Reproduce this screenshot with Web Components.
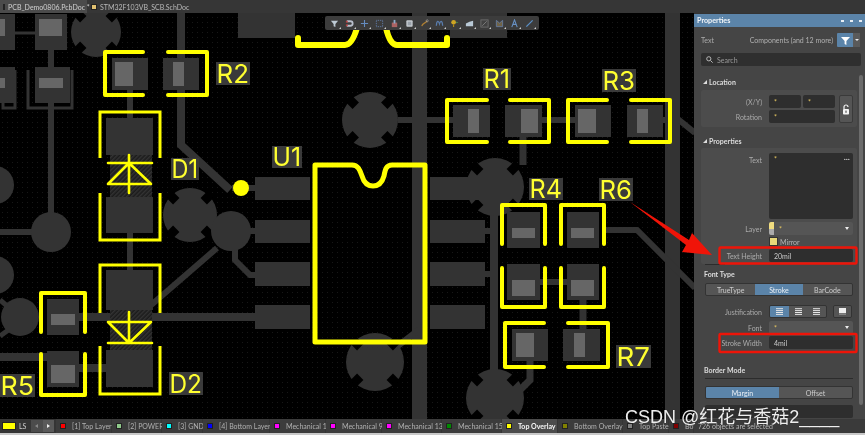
<!DOCTYPE html>
<html>
<head>
<meta charset="utf-8">
<title>PCB editor</title>
<style>
  html, body { margin: 0; background: #000; overflow: hidden; }
</style>
</head>
<body>
<ad-app>
  <doc-tabs slot="tabs">
    <doc-tab active color="#2f9c7c">PCB_Demo0806.PcbDoc *</doc-tab>
    <doc-tab color="#e0c070">STM32F103VB_SCB.SchDoc</doc-tab>
  </doc-tabs>

  <pcb-canvas slot="canvas"><pcb-toolbar></pcb-toolbar></pcb-canvas>

  <props-panel slot="panel">
    <prop-heading style="margin-top:9px">Location</prop-heading>
    <prop-box style="height:37px;margin-top:1px">
      <prop-row label="(X/Y)" style="margin-top:5px">
        <prop-field w="32">*</prop-field><prop-field w="32" style="margin-left:2px">*</prop-field>
      </prop-row>
      <prop-row label="Rotation" style="margin-top:2px">
        <prop-field w="66">*</prop-field>
      </prop-row>
      <lock-button></lock-button>
    </prop-box>
    <prop-heading style="margin-top:7px">Properties</prop-heading>
    <prop-box style="height:116px;margin-top:0">
      <prop-row top label="Text" style="margin-top:5px;height:66px;align-items:start">
        <prop-field w="84" tall more>*</prop-field>
      </prop-row>
      <prop-row label="Layer" style="margin-top:3px">
        <prop-field w="84" swatch select>*</prop-field>
      </prop-row>
      <prop-row style="margin-top:2px;height:9px">
        <prop-check>Mirror</prop-check>
      </prop-row>
      <prop-row label="Text Height" style="margin-top:3px">
        <prop-field w="84" plain>20mil</prop-field>
      </prop-row>
    </prop-box>
    <prop-rule style="width:20px;margin-left:11px"></prop-rule>
    <prop-title style="margin-top:4px">Font Type</prop-title>
    <seg-group style="margin:3px 0 0 11px;width:148px">
      <seg-button style="flex:50">TrueType</seg-button>
      <seg-button style="flex:48" active>Stroke</seg-button>
      <seg-button style="flex:50">BarCode</seg-button>
    </seg-group>
    <prop-row label="Justification" style="margin-top:9px;margin-left:7px">
      <seg-group style="width:58px">
        <seg-button active><align-icon></align-icon></seg-button>
        <seg-button><align-icon></align-icon></seg-button>
        <seg-button><align-icon></align-icon></seg-button>
      </seg-group>
      <seg-group style="width:19px;margin-left:6px"><seg-button><align-icon box></align-icon></seg-button></seg-group>
    </prop-row>
    <prop-row label="Font" style="margin-top:3px;margin-left:7px">
      <prop-field w="84" select>*</prop-field>
    </prop-row>
    <prop-row label="Stroke Width" style="margin-top:2px;margin-left:7px">
      <prop-field w="84" plain>4mil</prop-field>
    </prop-row>
    <prop-title style="margin-top:16px">Border Mode</prop-title>
    <prop-rule style="width:148px;margin:2px 0 0 11px"></prop-rule>
    <seg-group style="margin:7px 0 0 11px;width:148px">
      <seg-button active>Margin</seg-button>
      <seg-button>Offset</seg-button>
    </seg-group>
    <prop-row style="margin-top:5px;margin-left:7px;height:14px">
      <prop-field w="84" style="margin-left:-64px;width:148px"></prop-field>
    </prop-row>
  </props-panel>

  <layer-bar slot="layers">
    <layer-tab color="#ff0000">[1] Top Layer</layer-tab>
    <layer-tab color="#8fc98a">[2] POWER</layer-tab>
    <layer-tab color="#00ffff">[3] GND</layer-tab>
    <layer-tab color="#0000ff">[4] Bottom Layer</layer-tab>
    <layer-tab color="#ff00ff">Mechanical 1</layer-tab>
    <layer-tab color="#ff00ff">Mechanical 9</layer-tab>
    <layer-tab color="#ff00ff">Mechanical 13</layer-tab>
    <layer-tab color="#008a00">Mechanical 15</layer-tab>
    <layer-tab color="#ffff00" active>Top Overlay</layer-tab>
    <layer-tab color="#808000">Bottom Overlay</layer-tab>
    <layer-tab color="#808080">Top Paste</layer-tab>
    <layer-tab color="#800000">Bot</layer-tab>
  </layer-bar>

  <red-notes slot="notes"></red-notes>
</ad-app>

<script>
// main frame: tab strip, canvas + panel, layer strip
class AdApp extends HTMLElement {
  connectedCallback() {
    this.attachShadow({ mode: 'open' });
    this.shadowRoot.innerHTML = `
      <style>
        :host {
          display: grid;
          grid-template-columns: 694px 171px;
          grid-template-rows: 13px 406px 14px 2px;
          width: 865px;
          height: 435px;
          position: relative;
          overflow: hidden;
          font: 7px Lato, "Open Sans", sans-serif;
          color: #c4c4c4;
          filter: blur(0.35px);
        }
        .tabs { grid-column: 1 / 3; display: grid; }
        .layers { grid-column: 1 / 3; display: grid; }
        .strip { grid-column: 1 / 3; background: #c9c9c9; }
      </style>
      <div class="tabs"><slot name="tabs"></slot></div>
      <slot name="canvas"></slot>
      <slot name="panel"></slot>
      <div class="layers"><slot name="layers"></slot></div>
      <div class="strip"></div>
      <slot name="notes"></slot>
    `;
  }
}

class DocTabs extends HTMLElement {
  connectedCallback() {
    this.attachShadow({ mode: 'open' });
    this.shadowRoot.innerHTML = `
      <style>:host { display: flex; background: #363636; }</style>
      <slot></slot>
    `;
  }
}

class DocTab extends HTMLElement {
  connectedCallback() {
    const c = this.getAttribute('color');
    this.attachShadow({ mode: 'open' });
    this.shadowRoot.innerHTML = `
      <style>
        :host { display: flex; align-items: center; gap: 3px; padding: 0 0 0 3px; width: 87px; box-sizing: border-box; white-space: nowrap; color: #b8b8b8; }
        :host([active]) { background: #4b4b4b; color: #d0d0d0; }
        :host(:not([active])) { width: auto; padding-left: 4px; }
        i { width: 6px; height: 6px; background: ${c}; border: 1px solid #222; box-sizing: border-box; }
      </style>
      <i></i><slot></slot>
    `;
  }
}

// the board itself, drawn in page coordinates
const CU = '#333333';
const pad = (x1, y1, x2, y2) => `<rect x="${x1}" y="${y1}" width="${x2 - x1}" height="${y2 - y1}" fill="${CU}"/>`;
const paste = (x1, y1, x2, y2) => `<rect x="${x1}" y="${y1}" width="${x2 - x1}" height="${y2 - y1}" fill="#666"/>`;
const track = (d, w = 6) => `<path d="${d}" fill="none" stroke="${CU}" stroke-width="${w}"/>`;
const via = (x, y, r = 20) => `<circle cx="${x}" cy="${y}" r="${r}" fill="${CU}"/>`;
const thermal = (x, y, r = 28) => {
  const a = r * 0.72 * Math.SQRT1_2, b = (r + 2) * Math.SQRT1_2;
  const cut = [[1, 1], [1, -1], [-1, 1], [-1, -1]].map(([i, j]) =>
    `<path d="M${x + i * a} ${y + j * a}L${x + i * b} ${y + j * b}" stroke="#000" stroke-width="9"/>`).join('');
  return via(x, y, r) + cut;
};
const silk = (d, w = 4) => `<path d="${d}" fill="none" stroke="#ffff00" stroke-width="${w}" stroke-linecap="round" stroke-linejoin="round"/>`;
const label = (t, x1, y1, x2, y2) => `<rect x="${x1}" y="${y1}" width="${x2 - x1}" height="${y2 - y1}" fill="#3a3a3a"/>
  <text x="${x1 + 0.5}" y="${y2 - 2.5}" textLength="${x2 - x1 - 1.5}" lengthAdjust="spacingAndGlyphs">${t}</text>`;

class PcbCanvas extends HTMLElement {
  connectedCallback() {
    this.attachShadow({ mode: 'open' });
    this.shadowRoot.innerHTML = `
      <style>
        :host { display: block; position: relative; background: #000; overflow: hidden; }
        svg { display: block; }
        text { font: 400 26px Inter, "Open Sans", sans-serif; fill: #ffff30; }
      </style>
      <svg width="694" height="406" viewBox="0 13 694 406">
        <defs>
          <pattern id="grid" width="5" height="5" patternUnits="userSpaceOnUse"><rect x="2" y="2" width="1" height="1" fill="#171717"/></pattern>
          <pattern id="hatch" width="3" height="3" patternUnits="userSpaceOnUse" patternTransform="rotate(45)"><rect width="3" height="3" fill="#1c1c1c"/><rect width="1.4" height="3" fill="#333"/></pattern>
        </defs>
        <rect x="0" y="13" width="694" height="406" fill="url(#grid)"/>

        <rect x="412" y="13" width="15" height="406" fill="${CU}"/>
        <rect x="665" y="13" width="15" height="406" fill="${CU}"/>
        ${track('M181 13V145L230 190', 8)}
        ${track('M51 40V232M0 232H51', 6)}
        ${track('M15 33H35M3 70V108H15V70M28 70V108H72V70', 3)}
        ${track('M130 90V125', 6)}
        ${track('M130 233V272', 6)}
        ${track('M232 188H256', 6)}
        ${track('M231 231H256', 6)}
        ${track('M235 245V260L250 275H256', 6)}
        ${track('M217 248L150 306', 6)}
        ${track('M79 317H256', 8)}
        ${track('M0 357H47M79 368H106', 8)}
        ${track('M398 120H453M542 120H575M663 120H679L695 133', 6)}
        ${track('M523 137V165', 7)}
        ${track('M494 187V378', 8)}
        ${track('M485 188H494M485 231H494M485 274H494', 6)}
        ${track('M605 230H637L695 288', 6)}
        ${track('M540 282H567', 6)}
        ${track('M583 300V330', 7)}
        ${track('M530 360V380L515 395', 7)}
        ${track('M425 325L390 352', 6)}
        ${track('M0 300L14 312M0 336L14 326', 5)}

        ${thermal(96, 32, 25)}
        ${thermal(370, 120, 28)}
        ${thermal(190, 215, 27)}
        ${thermal(495, 187, 29)}
        ${thermal(375, 362, 29)}
        ${thermal(495, 398, 29)}
        ${via(51, 232, 20)}
        ${via(231, 231, 20)}
        ${via(20, 317, 19)}
        ${via(-5, 185, 19)}
        ${via(-5, 275, 19)}

        ${pad(238, 13, 295, 38)}${pad(450, 13, 507, 38)}
        ${pad(255, 177, 310, 200)}${pad(255, 220, 310, 243)}${pad(255, 262, 310, 286)}${pad(255, 305, 310, 329)}
        ${pad(430, 177, 485, 200)}${pad(430, 220, 485, 243)}${pad(430, 262, 485, 286)}${pad(430, 305, 485, 329)}

        ${pad(0, 14, 15, 50)}${paste(0, 19, 5, 36)}
        ${pad(35, 14, 67, 50)}${paste(39, 19, 62, 36)}
        ${pad(0, 67, 15, 103)}${paste(0, 78, 5, 88)}
        ${pad(35, 67, 70, 103)}${paste(39, 78, 63, 88)}

        ${pad(112, 58, 148, 90)}${paste(115, 62, 133, 86)}
        ${pad(163, 58, 199, 90)}${paste(173, 62, 184, 86)}
        ${pad(453, 105, 490, 137)}${paste(468, 109, 479, 133)}
        ${pad(505, 105, 542, 137)}${paste(521, 109, 538, 133)}
        ${pad(575, 105, 611, 137)}${paste(578, 109, 596, 133)}
        ${pad(627, 105, 663, 137)}${paste(637, 109, 648, 133)}
        ${pad(507, 212, 540, 248)}${paste(512, 228, 535, 238)}
        ${pad(567, 212, 599, 248)}${paste(571, 228, 594, 238)}
        ${pad(507, 264, 540, 300)}${paste(512, 280, 535, 296)}
        ${pad(567, 264, 599, 300)}${paste(571, 280, 594, 296)}
        ${pad(512, 329, 548, 361)}${paste(516, 333, 534, 357)}
        ${pad(563, 329, 600, 361)}${paste(574, 333, 585, 357)}
        ${pad(47, 299, 79, 335)}${paste(51, 314, 75, 325)}
        ${pad(47, 351, 79, 387)}${paste(51, 365, 75, 383)}

        ${pad(106, 118, 153, 155)}${pad(106, 197, 153, 233)}
        ${pad(106, 270, 153, 310)}${pad(106, 350, 153, 387)}
        <rect x="110" y="155" width="42" height="42" fill="url(#hatch)"/>
        <rect x="110" y="310" width="42" height="40" fill="url(#hatch)"/>

        ${silk('M143 52H105V95H143M168 52H207V95H168', 4)}
        ${silk('M487 100H447V142H487M510 100H549V142H510', 4)}
        ${silk('M607 100H568V142H607M631 100H670V142H631', 4)}
        ${silk('M502 244V205H545V244M561 244V205H604V244', 4)}
        ${silk('M502 268V307H545V268M561 268V307H604V268', 4)}
        ${silk('M544 323H505V367H544M568 323H608V367H568', 4)}
        ${silk('M41 332V293H85V332M41 354V395H85V354', 4)}
        <path d="M100 158V112H160V158M100 193V240H160V193M100 313V265H160V313M100 346V394H160V346" fill="none" stroke="#ffff00" stroke-width="3"/>
        ${silk('M108 163H152M129 163L108 184H151L129 163M129 155V193', 2.6)}
        ${silk('M108 343H152M129 343L108 322H151L129 343M129 312V343', 2.6)}
        <path d="M315 165H352C358 165 360 170 362 176C364 183 368 186 373 186C378 186 382 183 384 176C385 170 386 165 392 165H425V342H315Z" fill="none" stroke="#ffff00" stroke-width="5" stroke-linejoin="round"/>
        ${silk('M298 38V45H345Q352 45 357 28M386 28Q390 45 397 45H447V38', 6)}
        <circle cx="241" cy="188" r="8" fill="#ffff00"/>

        ${label('R2', 216, 62, 250, 85)}
        ${label('R1', 483, 68, 511, 90)}
        ${label('R3', 602, 69, 636, 92)}
        ${label('U1', 272, 146, 302, 168)}
        ${label('D1', 171, 158, 199, 180)}
        ${label('R4', 529, 178, 563, 200)}
        ${label('R6', 599, 178, 633, 201)}
        ${label('R7', 616, 345, 651, 368)}
        ${label('D2', 169, 372, 203, 395)}
        ${label('R5', 0, 374, 35, 397)}
      </svg>
      <slot></slot>
    `;
  }
}

// floating "active bar" over the board
const TOOL_ICONS = [
  '<path d="M1 2H9L6 5.5V9L4 8V5.5Z" fill="#d5e4f0"/>',
  '<path d="M2 2.5H6A2.5 2.5 0 0 1 6 7.5H2" fill="none" stroke="#cfd6e6" stroke-width="2"/><path d="M1 2H3V4H1Z" fill="#d04040"/><path d="M1 6H3V8H1Z" fill="#d04040"/>',
  '<path d="M5 1V9M1 5H9" stroke="#6c9bd8" stroke-width="1.2"/>',
  '<rect x="1.5" y="1.5" width="7" height="7" fill="none" stroke="#6c8fc8" stroke-dasharray="1 1"/>',
  '<rect x="2" y="4" width="6" height="5" fill="#c06a6a"/><rect x="4" y="1" width="2" height="4" fill="#9cc0e4"/>',
  '<rect x="1.5" y="1.5" width="7" height="7" rx="1" fill="#dfe4ea"/><rect x="3" y="3" width="4" height="4" fill="#aab2bc"/>',
  '<path d="M2 8C3 4 5 6 8 2" fill="none" stroke="#c08a30" stroke-width="1.4"/><circle cx="8" cy="2" r="1.2" fill="none" stroke="#c8c8c8" stroke-width=".6"/>',
  '<path d="M1.5 7.5C2 1 4 2 5 5.5 6 2 8 1 8.5 7.5" fill="none" stroke="#5f88c0" stroke-width="1.4"/>',
  '<circle cx="4" cy="3.6" r="2.6" fill="#e8b820"/><path d="M3.4 6H4.6V9H3.4Z" fill="#d0a010"/><path d="M7 3L9.4 3.6 7 4.6Z" fill="#50b050"/>',
  '<path d="M1 8V5L5 3 9 2V8Z" fill="#cfe2f2"/>',
  '<rect x="1" y="1" width="8" height="8" fill="#444" stroke="#777"/><path d="M2.5 7.5L7.5 2.5" stroke="#8a8a8a"/>',
  '<path d="M1.5 1.5V8.5H8.5V1.5L5 4.5Z" fill="#7a6a4a" stroke="#6c8fc8" stroke-width=".8"/>',
  '<path d="M2 9L5 1 8 9M3.2 6H6.8" fill="none" stroke="#6fa0dc" stroke-width="1.2"/>',
  '<path d="M1.5 8.5L8.5 1.5" stroke="#5f9fe0" stroke-width="1.4"/>'
];
class PcbToolbar extends HTMLElement {
  connectedCallback() {
    this.attachShadow({ mode: 'open' });
    this.shadowRoot.innerHTML = `
      <style>
        :host { position: absolute; left: 325px; top: 3px; display: flex; padding: 0 2px; height: 14px; background: #3c3c3c; border-radius: 2px; }
        span { position: relative; width: 15px; display: flex; align-items: center; justify-content: center; }
        span::after { content: ""; position: absolute; right: 1px; bottom: 1px; border: 1px solid transparent; border-right-color: #ccc; border-bottom-color: #ccc; }
        svg { width: 9px; height: 9px; opacity: .85; }
      </style>
      ${TOOL_ICONS.map(p => `<span><svg viewBox="0 0 10 10">${p}</svg></span>`).join('')}
    `;
  }
}

// properties panel
class PropsPanel extends HTMLElement {
  connectedCallback() {
    this.attachShadow({ mode: 'open' });
    this.shadowRoot.innerHTML = `
      <style>
        :host { display: flex; flex-direction: column; position: relative; background: #454545; border-top: 1px solid #333; box-sizing: border-box; height: 406px; overflow: hidden; }
        header { height: 13px; flex: none; background: #5b84a9; color: #f0f4f8; font-weight: 700; font-size: 7.2px; display: flex; align-items: center; padding: 0 3px 0 3px; }
        header span { flex: 1; }
        header i { width: 3px; height: 2px; background: #e8eef4; margin-left: 6px; }
        .scope { height: 26px; flex: none; display: flex; align-items: center; padding-left: 7px; color: #aaa; }
        .scope b { flex: 1; font-weight: 400; }
        .scope em { font-style: normal; color: #b0b0b0; margin-right: 4px; }
        .filter { width: 16px; height: 14px; background: #5b84a9; display: flex; align-items: center; justify-content: center; border-radius: 1px 0 0 1px; }
        .drop { width: 7px; height: 14px; background: #5a5a5a; margin-right: 5px; display: flex; align-items: center; justify-content: center; }
        .drop::after { content: ""; border: 2px solid transparent; border-top: 2.5px solid #eee; border-bottom: 0; }
        .search { height: 13px; flex: none; margin: 0 4px 0 7px; background: #2f2f2f; border-radius: 2px; display: flex; align-items: center; gap: 4px; padding-left: 5px; color: #999; }
        .body { display: flex; flex-direction: column; width: 163px; }
        .bar { position: absolute; right: 2px; top: 61px; bottom: 14px; width: 4px; background: #6c6c6c; border-radius: 2px; }
      </style>
      <header><span>Properties</span><i></i><i></i><i></i></header>
      <div class="scope"><b>Text</b><em>Components (and 12 more)</em>
        <div class="filter"><svg width="9" height="9" viewBox="0 0 10 10"><path d="M0 1H10L6 5.5V10L4 9V5.5Z" fill="#fff"/></svg></div><div class="drop"></div>
      </div>
      <div class="search">
        <svg width="7" height="7" viewBox="0 0 10 10"><circle cx="4" cy="4" r="3" fill="none" stroke="#bbb" stroke-width="1.4"/><path d="M6.5 6.5L9.5 9.5" stroke="#bbb" stroke-width="1.4"/></svg>
        <span>Search</span>
      </div>
      <div class="body"><slot></slot></div>
      <div class="bar"></div>
    `;
  }
}

class PropHeading extends HTMLElement {
  connectedCallback() {
    this.attachShadow({ mode: 'open' });
    this.shadowRoot.innerHTML = `
      <style>
        :host { display: flex; align-items: center; height: 14px; padding-left: 9px; gap: 2px; font-weight: 700; color: #dcdcdc; }
        i { border: 2px solid transparent; border-right-color: #ddd; border-bottom-color: #ddd; width: 0; height: 0; }
      </style>
      <i></i><slot></slot>
    `;
  }
}

class PropTitle extends HTMLElement {
  connectedCallback() {
    this.attachShadow({ mode: 'open' });
    this.shadowRoot.innerHTML = `
      <style>:host { display: block; height: 11px; line-height: 11px; padding-left: 10px; font-weight: 700; color: #dcdcdc; }</style>
      <slot></slot>
    `;
  }
}

class PropRule extends HTMLElement {
  connectedCallback() {
    this.attachShadow({ mode: 'open' });
    this.shadowRoot.innerHTML = `<style>:host { display: block; height: 1px; background: #2c2c2c; flex: none; }</style>`;
  }
}

class PropBox extends HTMLElement {
  connectedCallback() {
    this.attachShadow({ mode: 'open' });
    this.shadowRoot.innerHTML = `
      <style>:host { display: flex; flex-direction: column; position: relative; flex: none; margin-left: 7px; width: 156px; background: #4c4c4c; border-radius: 2px; }</style>
      <slot></slot>
    `;
  }
}

class PropRow extends HTMLElement {
  connectedCallback() {
    const text = this.getAttribute('label') || '';
    this.attachShadow({ mode: 'open' });
    this.shadowRoot.innerHTML = `
      <style>
        :host { display: flex; align-items: center; height: 13px; flex: none; }
        :host([top]) label { margin-top: 3px; }
        label { width: 61px; margin-right: 7px; flex: none; text-align: right; color: #ababab; white-space: nowrap; }
      </style>
      <label>${text}</label><slot></slot>
    `;
  }
}

class PropField extends HTMLElement {
  connectedCallback() {
    const w = this.getAttribute('w');
    const select = this.hasAttribute('select');
    const swatch = this.hasAttribute('swatch');
    const more = this.hasAttribute('more');
    this.attachShadow({ mode: 'open' });
    this.shadowRoot.innerHTML = `
      <style>
        :host { display: flex; align-items: center; position: relative; width: ${w}px; height: 13px; box-sizing: border-box; padding-left: 5px; background: #2e2e2e; border-radius: 2px; color: #e8c860; flex: none; }
        :host([plain]) { color: #c8c8c8; }
        :host([tall]) { height: 66px; align-items: flex-start; padding-top: 2px; }
        :host([select]) { background: #555; }
        .sw { position: absolute; left: 0; top: 0; width: 5px; height: 13px; border-radius: 2px 0 0 2px; background: linear-gradient(#f0dc80 55%, #aaa 55%); }
        :host([swatch]) { padding-left: 10px; }
        .arrow { position: absolute; right: 4px; top: 5px; border: 2.5px solid transparent; border-top: 3px solid #eee; border-bottom: 0; }
        .more { position: absolute; right: 3px; top: 0; color: #eee; font-weight: 700; letter-spacing: .3px; }
      </style>
      ${swatch ? '<i class="sw"></i>' : ''}<slot></slot>
      ${select ? '<i class="arrow"></i>' : ''}
      ${more ? '<span class="more">...</span>' : ''}
    `;
  }
}

class PropCheck extends HTMLElement {
  connectedCallback() {
    this.attachShadow({ mode: 'open' });
    this.shadowRoot.innerHTML = `
      <style>
        :host { display: flex; align-items: center; gap: 2px; margin-left: 0; color: #b4b4b4; }
        i { width: 9px; height: 9px; box-sizing: border-box; background: #e8d878; border: 1.5px solid #333; }
      </style>
      <i></i><slot></slot>
    `;
  }
}

class LockButton extends HTMLElement {
  connectedCallback() {
    this.attachShadow({ mode: 'open' });
    this.shadowRoot.innerHTML = `
      <style>
        :host { position: absolute; left: 138px; top: 5px; width: 14px; height: 28px; display: flex; align-items: center; justify-content: center; background: #555; border: 1px solid #3a3a3a; border-radius: 2px; box-sizing: border-box; }
      </style>
      <svg width="8" height="11" viewBox="0 0 8 11"><path d="M2 5V3A2 2 0 0 1 6 3" fill="none" stroke="#f4f4f4" stroke-width="1.2"/><rect x="1" y="5" width="6" height="5.5" rx=".8" fill="#f4f4f4"/><rect x="3.4" y="6.6" width="1.2" height="2.2" fill="#555"/></svg>
    `;
  }
}

class SegGroup extends HTMLElement {
  connectedCallback() {
    this.attachShadow({ mode: 'open' });
    this.shadowRoot.innerHTML = `
      <style>:host { display: flex; height: 13px; flex: none; background: #3a3a3a; border-radius: 2px; overflow: hidden; box-sizing: border-box; border: 1px solid #333; }</style>
      <slot></slot>
    `;
  }
}

class SegButton extends HTMLElement {
  connectedCallback() {
    this.attachShadow({ mode: 'open' });
    this.shadowRoot.innerHTML = `
      <style>
        :host { flex: 1; display: flex; align-items: center; justify-content: center; background: #555; color: #ccc; }
        :host([active]) { background: #5b84a9; color: #e8eef4; }
      </style>
      <slot></slot>
    `;
  }
}

class AlignIcon extends HTMLElement {
  connectedCallback() {
    const box = this.hasAttribute('box');
    this.attachShadow({ mode: 'open' });
    this.shadowRoot.innerHTML = `
      <style>:host { display: flex; }</style>
      <svg width="9" height="7" viewBox="0 0 9 7">${box
        ? '<rect x="1" y="0" width="7" height="5" fill="#eee"/><rect x="1" y="5.5" width="7" height="1.2" fill="#999"/>'
        : '<path d="M1 .7H8M1 2.6H8M1 4.5H8M1 6.4H8" stroke="#e6e6e6"/>'}</svg>
    `;
  }
}

// layer strip at the bottom
class LayerBar extends HTMLElement {
  connectedCallback() {
    this.attachShadow({ mode: 'open' });
    this.shadowRoot.innerHTML = `
      <style>
        :host { display: flex; align-items: stretch; background: #353535; position: relative; color: #b0b0b0; overflow: hidden; }
        .cur { width: 14px; height: 8px; margin: 3px 3px 0 2px; background: #ffff00; border: 1px solid #222; box-sizing: border-box; flex: none; }
        .ls { width: 10px; line-height: 14px; flex: none; color: #ccc; }
        .nav { width: 23px; margin-left: 2px; margin-right: 2px; flex: none; display: flex; height: 12px; align-self: center; }
        .nav i { flex: 1; background: #5a5a5a; position: relative; }
        .nav i::after { content: ""; position: absolute; left: 4px; top: 3.5px; border: 2.5px solid transparent; border-left: 3px solid #eee; border-right: 0; }
        .nav i:first-child { background: #4c4c4c; }
        .nav i:first-child::after { border-left: 0; border-right: 3px solid #888; }
        .tabs { display: grid; grid-template-columns: 56px 50px 41px 67px 56px 56px 60px 60px 56px 65px 46px 25px; flex: none; }
        .count { position: absolute; left: 694px; right: 0; top: 0; bottom: 0; background: #3a3a3a; padding-left: 4px; line-height: 15px; color: #b4b4b4; white-space: nowrap; }
      </style>
      <div class="cur"></div><div class="ls">LS</div>
      <div class="nav"><i></i><i></i></div>
      <div class="tabs"><slot></slot></div>
      <div class="count">726 objects are selected</div>
    `;
  }
}

class LayerTab extends HTMLElement {
  connectedCallback() {
    const c = this.getAttribute('color');
    this.attachShadow({ mode: 'open' });
    this.shadowRoot.innerHTML = `
      <style>
        :host { display: flex; align-items: center; gap: 6px; padding-left: 4px; margin-right: 1px; white-space: nowrap; background: #3c3c3c; }
        :host([active]) { background: #4c4c4c; color: #f4f4f4; font-weight: 700; }
        i { width: 6px; height: 6px; flex: none; box-sizing: border-box; background: ${c}; border: 1px solid #222; }
      </style>
      <i></i><slot></slot>
    `;
  }
}

// red marks and the watermark, laid over everything
class RedNotes extends HTMLElement {
  connectedCallback() {
    this.attachShadow({ mode: 'open' });
    this.shadowRoot.innerHTML = `
      <style>
        :host { position: absolute; left: 0; top: 0; width: 865px; height: 435px; pointer-events: none; }
        svg { position: absolute; left: 0; top: 0; }
        .mark { position: absolute; left: 625px; top: 402px; font: 18px "Liberation Sans", "Noto Sans CJK SC", sans-serif; color: #eeeeee; white-space: nowrap; text-shadow: 0 0 1px #222; }
      </style>
      <svg width="865" height="435">
        <path d="M630 202L689 240 692 233 712 255 682 252 686 245Z" fill="#f01408"/>
        <rect x="719.5" y="247.5" width="137" height="16" rx="1" fill="none" stroke="#ee1408" stroke-width="2.4"/>
        <rect x="719.5" y="334" width="137" height="18" rx="1" fill="none" stroke="#ee1408" stroke-width="2.4"/>
      </svg>
      <div class="mark">CSDN @红花与香菇2____</div>
    `;
  }
}

customElements.define('ad-app', AdApp);
customElements.define('doc-tabs', DocTabs);
customElements.define('doc-tab', DocTab);
customElements.define('pcb-canvas', PcbCanvas);
customElements.define('pcb-toolbar', PcbToolbar);
customElements.define('props-panel', PropsPanel);
customElements.define('prop-heading', PropHeading);
customElements.define('prop-title', PropTitle);
customElements.define('prop-rule', PropRule);
customElements.define('prop-box', PropBox);
customElements.define('prop-row', PropRow);
customElements.define('prop-field', PropField);
customElements.define('prop-check', PropCheck);
customElements.define('lock-button', LockButton);
customElements.define('seg-group', SegGroup);
customElements.define('seg-button', SegButton);
customElements.define('align-icon', AlignIcon);
customElements.define('layer-bar', LayerBar);
customElements.define('layer-tab', LayerTab);
customElements.define('red-notes', RedNotes);
</script>
</body>
</html>
